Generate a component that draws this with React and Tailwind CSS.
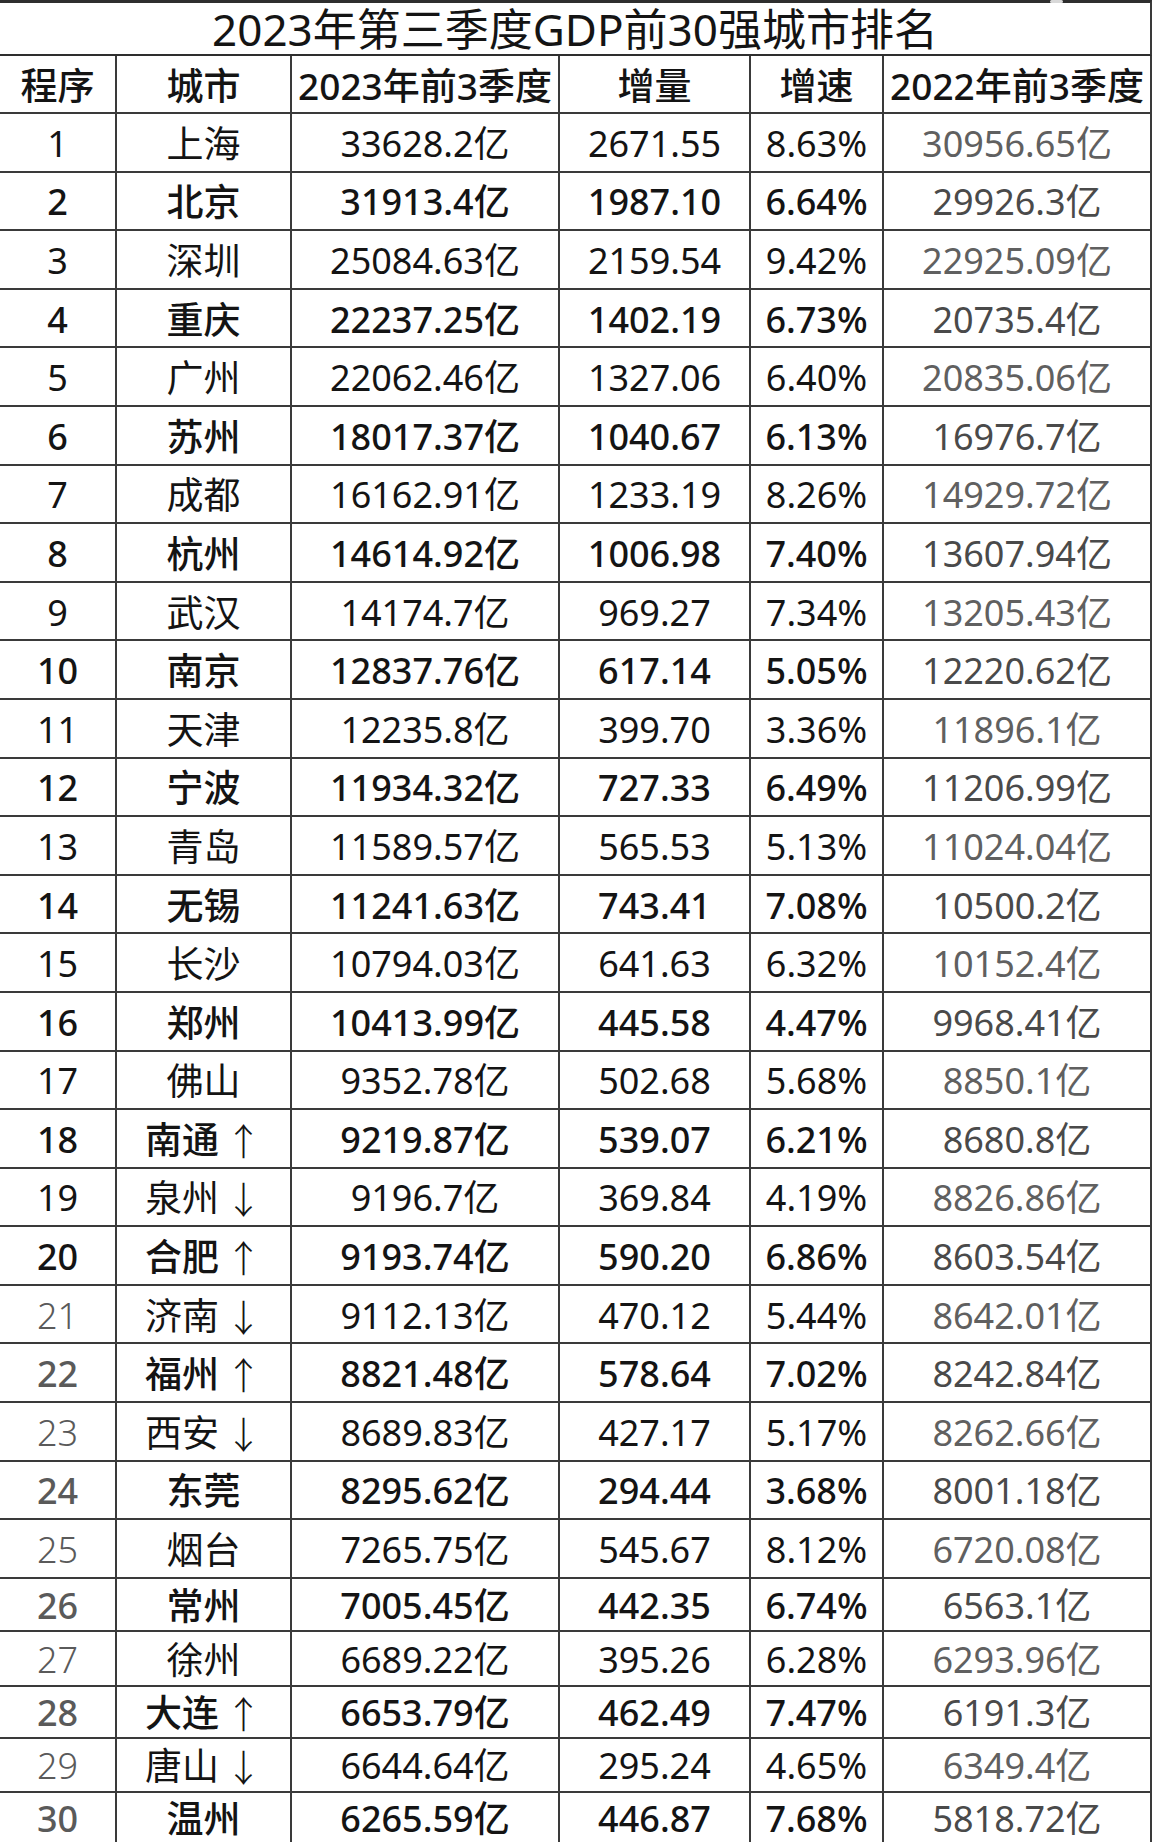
import React from "react";

const rows = [
  ["1", "上海", "", "33628.2亿", "2671.55", "8.63%", "30956.65亿"],
  ["2", "北京", "", "31913.4亿", "1987.10", "6.64%", "29926.3亿"],
  ["3", "深圳", "", "25084.63亿", "2159.54", "9.42%", "22925.09亿"],
  ["4", "重庆", "", "22237.25亿", "1402.19", "6.73%", "20735.4亿"],
  ["5", "广州", "", "22062.46亿", "1327.06", "6.40%", "20835.06亿"],
  ["6", "苏州", "", "18017.37亿", "1040.67", "6.13%", "16976.7亿"],
  ["7", "成都", "", "16162.91亿", "1233.19", "8.26%", "14929.72亿"],
  ["8", "杭州", "", "14614.92亿", "1006.98", "7.40%", "13607.94亿"],
  ["9", "武汉", "", "14174.7亿", "969.27", "7.34%", "13205.43亿"],
  ["10", "南京", "", "12837.76亿", "617.14", "5.05%", "12220.62亿"],
  ["11", "天津", "", "12235.8亿", "399.70", "3.36%", "11896.1亿"],
  ["12", "宁波", "", "11934.32亿", "727.33", "6.49%", "11206.99亿"],
  ["13", "青岛", "", "11589.57亿", "565.53", "5.13%", "11024.04亿"],
  ["14", "无锡", "", "11241.63亿", "743.41", "7.08%", "10500.2亿"],
  ["15", "长沙", "", "10794.03亿", "641.63", "6.32%", "10152.4亿"],
  ["16", "郑州", "", "10413.99亿", "445.58", "4.47%", "9968.41亿"],
  ["17", "佛山", "", "9352.78亿", "502.68", "5.68%", "8850.1亿"],
  ["18", "南通", "↑", "9219.87亿", "539.07", "6.21%", "8680.8亿"],
  ["19", "泉州", "↓", "9196.7亿", "369.84", "4.19%", "8826.86亿"],
  ["20", "合肥", "↑", "9193.74亿", "590.20", "6.86%", "8603.54亿"],
  ["21", "济南", "↓", "9112.13亿", "470.12", "5.44%", "8642.01亿"],
  ["22", "福州", "↑", "8821.48亿", "578.64", "7.02%", "8242.84亿"],
  ["23", "西安", "↓", "8689.83亿", "427.17", "5.17%", "8262.66亿"],
  ["24", "东莞", "", "8295.62亿", "294.44", "3.68%", "8001.18亿"],
  ["25", "烟台", "", "7265.75亿", "545.67", "8.12%", "6720.08亿"],
  ["26", "常州", "", "7005.45亿", "442.35", "6.74%", "6563.1亿"],
  ["27", "徐州", "", "6689.22亿", "395.26", "6.28%", "6293.96亿"],
  ["28", "大连", "↑", "6653.79亿", "462.49", "7.47%", "6191.3亿"],
  ["29", "唐山", "↓", "6644.64亿", "295.24", "4.65%", "6349.4亿"],
  ["30", "温州", "", "6265.59亿", "446.87", "7.68%", "5818.72亿"],
];

const heights = [
  "h-[58.6px]", "h-[58.6px]", "h-[58.6px]", "h-[58.6px]", "h-[58.6px]",
  "h-[58.6px]", "h-[58.6px]", "h-[58.6px]", "h-[58.6px]", "h-[58.6px]",
  "h-[58.6px]", "h-[58.6px]", "h-[58.6px]", "h-[58.6px]", "h-[58.6px]",
  "h-[58.6px]", "h-[58.6px]", "h-[58.6px]", "h-[58.6px]", "h-[58.6px]",
  "h-[58.6px]", "h-[58.6px]", "h-[58.6px]", "h-[58.6px]", "h-[58.6px]",
  "h-[53px]", "h-[55px]", "h-[52px]", "h-[54px]", "h-[52px]",
];

const grid = "grid grid-cols-[115px_175px_268px_191px_133px_268px]";
const cell = "flex items-center justify-center border-l-2 border-[#3a3a3a] whitespace-nowrap pt-[3px]";

export default function App() {
  return (
    <div
      className="w-[1152px] h-[1842px] overflow-hidden bg-white text-[#141414]"
      style={{ fontFamily: '"Noto Sans", "Noto Sans CJK SC", sans-serif' }}
    >
      <div className="relative flex h-[56px] items-center justify-center border-t-[3px] border-b-2 border-r-2 border-[#2e2e2e] border-r-[#3a3a3a] text-[44px] leading-[50px]">
        <span>2023年第三季度GDP前30强城市排名</span>
        <span className="absolute top-[-3px] left-[1050px] h-[3px] w-[13px] rounded-sm bg-[#d8d8d8]" />
      </div>
      <div className={`${grid} h-[58px] border-b-2 border-r-2 border-[#3a3a3a] text-[37px] font-medium leading-[44px]`}>
        <div className="flex items-center justify-center whitespace-nowrap pt-[3px]">程序</div>
        <div className={cell}>城市</div>
        <div className={cell}>2023年前3季度</div>
        <div className={cell}>增量</div>
        <div className={cell}>增速</div>
        <div className={cell}>2022年前3季度</div>
      </div>
      {rows.map((r, i) => {
        const n = i + 1;
        const bold = n % 2 === 0;
        const w = bold ? "font-medium" : "font-normal";
        const rankColor = n > 20 ? "text-[#5a5a5a]" : "";
        const lastColor = bold ? "text-[#4a4a4a]" : "text-[#606060]";
        return (
          <div
            key={n}
            className={`${grid} ${heights[i]} border-b-2 border-r-2 border-[#3a3a3a] text-[36px] leading-[44px] ${w}`}
          >
            <div className={`flex items-center justify-center whitespace-nowrap pt-[3px] ${rankColor} ${n > 20 && !bold ? "font-light" : ""}`}>
              {r[0]}
            </div>
            <div className={`${cell} text-[37px] leading-[40px]`}>
              <span>{r[1]}</span>
              {r[2] && (
                <span className="ml-[6px] font-light" style={{ fontFamily: '"Noto Sans CJK SC", sans-serif' }}>
                  {r[2]}
                </span>
              )}
            </div>
            <div className={cell}>{r[3]}</div>
            <div className={cell}>{r[4]}</div>
            <div className={cell}>{r[5]}</div>
            <div className={`${cell} ${lastColor} font-normal`}>{r[6]}</div>
          </div>
        );
      })}
    </div>
  );
}
